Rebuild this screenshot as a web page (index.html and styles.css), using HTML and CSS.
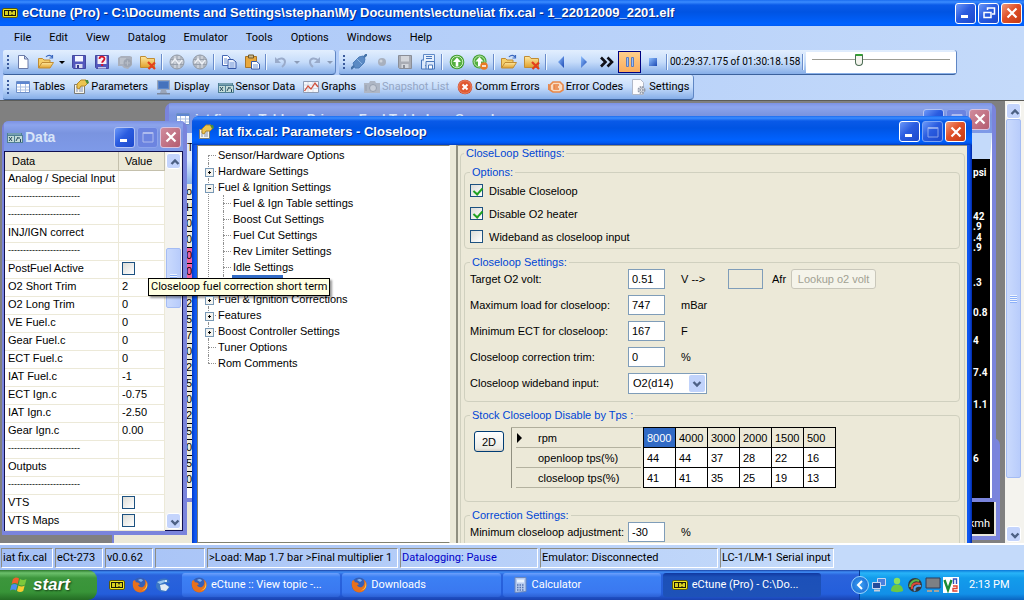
FILE: index.html
```html
<!DOCTYPE html>
<html lang="en">
<head>
<meta charset="utf-8">
<title>eCtune (Pro)</title>
<link rel="stylesheet" href="styles.css">
</head>
<body>
<svg class="sprite" aria-hidden="true">
  <defs>
    <linearGradient id="g-folder" x1="0" y1="0" x2="0" y2="1"><stop offset="0" stop-color="#ffe9a0"/><stop offset="1" stop-color="#e0a02c"/></linearGradient>
    <linearGradient id="g-blue" x1="0" y1="0" x2="1" y2="1"><stop offset="0" stop-color="#8fc0ff"/><stop offset="1" stop-color="#1c49b4"/></linearGradient>
    <symbol id="i-app" viewBox="0 0 16 16"><rect x=".5" y="3.500" width="15" height="9" rx="1.500" fill="#f0e820" stroke="#58580c"/><rect x="2" y="5" width="12" height="6" fill="#1a1a08"/><path d="M3 6h3v4H3zM7 6h2l1 2 1-2h2v4h-2l-1-1-1 1H7z" fill="#d8d020"/></symbol>
    <symbol id="i-new" viewBox="0 0 16 16"><path d="M3.500 1.500h6l3.500 3.500v9.500h-9.500z" fill="#fff" stroke="#6b7ba8"/><path d="M9.500 1.500v3.500h3.500z" fill="#cdd8ef" stroke="#6b7ba8"/></symbol>
    <symbol id="i-open" viewBox="0 0 16 16"><path d="M.5 14V4.500h4l1.500 1.500h6v3" fill="#f5cf6a" stroke="#c08c34"/><path d="M.5 14L4 8.500h11.500L12 14z" fill="url(#g-folder)" stroke="#c08c34"/><path d="M8 3c2-2.500 5-2 6 0M14.500 1v3h-3" fill="none" stroke="#3b68c0" stroke-width="1.200"/></symbol>
    <symbol id="i-save" viewBox="0 0 16 16"><path d="M1.500 1.500h13v13h-12l-1-1z" fill="#5358bd" stroke="#4448a0"/><path d="M4 2h8v5.500H4z" fill="#f4f6ff"/><path d="M4.500 10h7v4h-7z" fill="#d9dcf0"/><path d="M6 11h2v3H6z" fill="#33388c"/></symbol>
    <symbol id="i-saveas" viewBox="0 0 16 16"><path d="M1.500 1.500h13v13h-12l-1-1z" fill="#5358bd" stroke="#4448a0"/><path d="M3.500 2h9v8h-9z" fill="#f7f0f4"/><path d="M5.500 5c0-3 5-3 5-.2 0 2-2.300 1.800-2.300 4" fill="none" stroke="#d4142c" stroke-width="1.800"/><path d="M7.200 10h2v2h-2z" fill="#d4142c"/><path d="M4 13h8v1.500H4z" fill="#c4c8ea"/></symbol>
    <symbol id="i-savegray" viewBox="0 0 16 16"><path d="M1.500 1.500h13v13h-12l-1-1z" fill="#a9acb4" stroke="#8a8e98"/><path d="M4 2h8v5.500H4z" fill="#d3d6dc"/><path d="M4.500 10h7v4h-7z" fill="#d3d6dc"/><path d="M6 11h2v3H6z" fill="#8a8e98"/></symbol>
    <symbol id="i-print" viewBox="0 0 16 16"><path d="M1 4l3-2h9l2 1v8l-4 4-4-1-2-2H1z" fill="#aab0bc"/><path d="M3 4h6v6H3z" fill="#bcc2cc"/><circle cx="10.500" cy="9" r="4" fill="#9ea5b2"/><path d="M8 9h5M10.500 6.500v5" stroke="#b8bec8"/></symbol>
    <symbol id="i-folderx" viewBox="0 0 16 16"><path d="M.5 13.500v-11h5l1.500 2h7.500v9z" fill="url(#g-folder)" stroke="#c08c34"/><path d="M8 8l7 7M15 8.500L8.500 15" stroke="#e2401c" stroke-width="2.200"/></symbol>
    <symbol id="i-chip" viewBox="0 0 16 16"><circle cx="8" cy="8" r="7" fill="#c9ced6" stroke="#9098a4"/><path d="M4 2.500v11M8 1v14M12 2.500v11M1 5.500h14M1 10.500h14" stroke="#98a0ac"/><path d="M3 9l3-4 4 5 3-4" fill="none" stroke="#eef1f6" stroke-width="1.400"/></symbol>
    <symbol id="i-copy" viewBox="0 0 16 16"><path d="M1.500 1.500h5l2.500 2.500v7.500H1.500z" fill="#fff" stroke="#4668b4"/><path d="M7 5.500h5l3 2.500v6.500H7z" fill="#e7effd" stroke="#3557a8"/><path d="M3 5h3M3 7h3M3 9h3M8.500 9h5M8.500 11h5M8.500 13h5" stroke="#6f93d6"/></symbol>
    <symbol id="i-paste" viewBox="0 0 16 16"><path d="M1.500 2.500h11v11h-11z" fill="#e9a83c" stroke="#a87428"/><path d="M4.500 1h5v3h-5z" fill="#ccb78a" stroke="#6f5a2c"/><path d="M7.500 7.500h5l3 2.500v5H7.500z" fill="#fff" stroke="#3557a8"/><path d="M9 11h5M9 13h5" stroke="#6f93d6"/></symbol>
    <symbol id="i-undo" viewBox="0 0 16 16"><path d="M3 7c4-4 9-3 9 1 0 2-1 3.500-3 5" fill="none" stroke="#9aabca" stroke-width="2"/><path d="M2 3v6h6z" fill="#9aabca"/></symbol>
    <symbol id="i-redo" viewBox="0 0 16 16"><path d="M13 7C9 3 4 4 4 8c0 2 1 3.500 3 5" fill="none" stroke="#9aabca" stroke-width="2"/><path d="M14 3v6H8z" fill="#9aabca"/></symbol>
    <symbol id="i-plug" viewBox="0 0 16 16"><path d="M0 15l4-4M12 4l4-4" stroke="#4672a8" stroke-width="2.400"/><path d="M2 9l6-6 4-1 2 3-1 4-5 5-4 0z" fill="#5b8ac4" stroke="#4c7cb8"/><path d="M6 5l5 5" stroke="#8cb4e4"/></symbol>
    <symbol id="i-dot" viewBox="0 0 16 16"><circle cx="8" cy="8" r="4" fill="#a8b0be"/><circle cx="7" cy="7" r="1.500" fill="#ced3dc"/></symbol>
    <symbol id="i-disk2" viewBox="0 0 16 16"><path d="M3.500 .5h11v11h-11z" fill="#e6f0fc" stroke="#5f8ac8"/><path d="M3.500 6h-2v9h13V7.500H6V15" fill="#dbe8fa" stroke="#4a78bc"/><path d="M6 2.500h6M6 4.500h6M8.500 11h4v4h-4z" stroke="#4a78bc" fill="#fff"/></symbol>
    <symbol id="i-up" viewBox="0 0 16 16"><circle cx="8" cy="8" r="7.300" fill="#3f9c2c"/><circle cx="8" cy="8" r="5.800" fill="#54b040" stroke="#c6ecb8"/><path d="M8 3.500L12 8H9.300v4.500H6.700V8H4z" fill="#fff"/></symbol>
    <symbol id="i-upminus" viewBox="0 0 16 16"><circle cx="7.500" cy="7.500" r="7" fill="#3f9c2c"/><circle cx="7.500" cy="7.500" r="5.500" fill="#54b040" stroke="#c6ecb8"/><path d="M7.500 3l4 4.500H9V12H6V7.500H3.500z" fill="#fff"/><circle cx="12" cy="12" r="3.800" fill="#e87a24"/><path d="M10 12h4" stroke="#fff" stroke-width="1.500"/></symbol>
    <symbol id="i-left" viewBox="0 0 16 16"><path d="M11 2v12L5 8z" fill="url(#g-blue)"/></symbol>
    <symbol id="i-right" viewBox="0 0 16 16"><path d="M5 2v12l6-6z" fill="url(#g-blue)"/></symbol>
    <symbol id="i-ff" viewBox="0 0 16 16"><path d="M2 3.500L6.500 8 2 12.500M8.500 3.500L13 8l-4.500 4.500" fill="none" stroke="#101018" stroke-width="2.600"/></symbol>
    <symbol id="i-pause" viewBox="0 0 16 16"><path d="M4.500 3.500h2v9h-2zM9.500 3.500h2v9h-2z" fill="#9cc0f4" stroke="#5c7cc0"/></symbol>
    <symbol id="i-stop" viewBox="0 0 16 16"><path d="M4 4h8v8H4z" fill="url(#g-blue)"/></symbol>
    <symbol id="i-table" viewBox="0 0 16 16"><path d="M1.500 2.500h13v11h-13z" fill="#fff" stroke="#6d8fc8"/><path d="M2 3h12v2H2z" fill="#5d86d0"/><path d="M2 8h12M2 11h12M5.500 5v8M10.500 5v8" stroke="#a9bfe4"/></symbol>
    <symbol id="i-params" viewBox="0 0 16 16"><path d="M1.500 5.500h10v9h-10z" fill="#f6f5ee" stroke="#7c7c74"/><path d="M3 8h2M3 10h2M3 12h2M6 8h4M6 10h4M6 12h4" stroke="#7c90b8"/><path d="M4 5l4-4h5l2 3-3 3-4 0-2 3-2-1z" fill="#ecc450" stroke="#b48828"/><path d="M12 1h3l1 3-2 1z" fill="#4c8c3c"/></symbol>
    <symbol id="i-display" viewBox="0 0 16 16"><path d="M1.500 1.500h12v9h-12z" fill="#5b86c8" stroke="#9aa6ba"/><path d="M3 3h9v6H3z" fill="#4572bc"/><path d="M5 11h5l1 3H4z" fill="#9aa6ba"/><path d="M1 14h13v1.500H1z" fill="#7d889c"/></symbol>
    <symbol id="i-sensor" viewBox="0 0 16 16"><path d="M0 4h15v2h1v8H0z" fill="#4f7f94"/><path d="M1 7h6v6H1zM8 7h7v6H8z" fill="#c4dcd8"/><path d="M1 5h13" stroke="#9cc0cc"/><path d="M2 8l3 4M5 8l-3 4M9 12l2-4M12 8v2M13.500 10v3" stroke="#24485c"/></symbol>
    <symbol id="i-graph" viewBox="0 0 16 16"><path d="M.5 2.500h15v11H.5z" fill="#f6f7fb" stroke="#8e9cb4"/><path d="M1 6h14M1 9.500h14M5 3v10M10 3v10" stroke="#d6dbe6"/><path d="M1.500 12L5 7l3 3 4-6 3 4" fill="none" stroke="#d0503c" stroke-width="1.300"/></symbol>
    <symbol id="i-camera" viewBox="0 0 16 16"><path d="M0 4h5l1-2h5l1 2h4v10H0z" fill="#aeb6c4"/><circle cx="9" cy="9" r="3.500" fill="#c7cdd8" stroke="#969fae"/><path d="M2 6v6" stroke="#969fae"/></symbol>
    <symbol id="i-error" viewBox="0 0 16 16"><circle cx="8" cy="8" r="7.300" fill="#cc3c1c"/><circle cx="8" cy="8" r="6.300" fill="#e05830" stroke="#ec8c6c"/><path d="M5.500 5.500l5 5M10.500 5.500l-5 5" stroke="#fff" stroke-width="2"/></symbol>
    <symbol id="i-engine" viewBox="0 0 16 16"><path d="M2 6l3-3h7l3 3v5l-3 2H5l-3-2z" fill="#f8dcc4" stroke="#e88848" stroke-width="1.600"/><path d="M.8 5v6M11 6H6v4h5M6 8h4" fill="none" stroke="#e88040" stroke-width="1.400"/></symbol>
    <symbol id="i-gear" viewBox="0 0 16 16"><path d="M1.500 .5h8l3 3v12h-11z" fill="#fcfcfe" stroke="#b0b8c8"/><circle cx="10.500" cy="11" r="3" fill="#e4e6ea" stroke="#949cac" stroke-width="2" stroke-dasharray="1.600 .8"/><circle cx="10.500" cy="11" r="1.200" fill="#fff" stroke="#949cac"/></symbol>
    <symbol id="i-min" viewBox="0 0 16 16"><path d="M3 10h7v3H3z" fill="#fff"/></symbol>
    <symbol id="i-max" viewBox="0 0 16 16"><path d="M3 3.500h10v9.500H3z" fill="none" stroke="#fff"/><path d="M3 4h10" stroke="#fff" stroke-width="2"/></symbol>
    <symbol id="i-restore" viewBox="0 0 16 16"><path d="M6.500 5V3h7v6H11" fill="none" stroke="#fff" stroke-width="1.500"/><path d="M3 7.500h7v5H3z" fill="none" stroke="#fff" stroke-width="1.500"/></symbol>
    <symbol id="i-close" viewBox="0 0 16 16"><path d="M3.500 3.500l9 9M12.500 3.500l-9 9" stroke="#fff" stroke-width="2.200"/></symbol>
    <symbol id="i-chevup" viewBox="0 0 16 16"><path d="M4.500 10L8 6.500l3.500 3.500" fill="none" stroke="#4d6185" stroke-width="2.400"/></symbol>
    <symbol id="i-chevdown" viewBox="0 0 16 16"><path d="M4.500 6.500L8 10l3.500-3.500" fill="none" stroke="#4d6185" stroke-width="2.400"/></symbol>
    <symbol id="i-chevleft" viewBox="0 0 16 16"><path d="M10 4L6 8l4 4" fill="none" stroke="#fff" stroke-width="2"/></symbol>
    <symbol id="i-flag" viewBox="0 0 20 20"><path d="M4 4c2-2 4-2 6-.6L8.600 9C7 7.800 4.800 7.800 2.600 9z" fill="#f0602c"/><path d="M11 4c2 1.400 4.500 1.200 6.500 0L16 9.600c-2 1.200-4.200 1.200-6.300 0z" fill="#7cc83c"/><path d="M2.400 10c2-1.400 4.200-1.200 6 0L7 15.500c-2-1.200-4-1.200-6 0z" fill="#4c8cf0"/><path d="M9.400 10.600c2 1.300 4.300 1.200 6.300 0L14.200 16c-2 1.200-4.200 1.200-6.200 0z" fill="#f8cc30"/></symbol>
    <symbol id="i-fox" viewBox="0 0 16 16"><circle cx="8" cy="8" r="7.500" fill="#3560b8"/><path d="M1 4c-1 6 1 11 7 11.500 5 0 8-4 7.500-9.500-1-2-2-3-3-3.500 1.500 3 1 6-1.500 7.500-3 1-4.500-.5-5-2l2-.5C7 5.500 5 5 4 5.500L3 3z" fill="#e8701c"/><path d="M14 4c1.500 4 0 8-4 9.500 4-.5 6-3 5-7z" fill="#fcd048"/><path d="M6 3c2-1.500 4-1 5 .5L9 5z" fill="#7fb0ec"/></symbol>
    <symbol id="i-bird" viewBox="0 0 16 16"><path d="M1 9C1 4 5 1 10 1.500c3 .5 4.500 2 5 4l-5 1 5 3c-1 4-5 6-9 5-3-1-5-3-5-5.500z" fill="#3c78c4"/><path d="M5 8l5-1 4 3-3 4-5-1z" fill="#e4ecf4"/><path d="M2 5l7-2 3 1-7 3z" fill="#9cc8f0"/><circle cx="11" cy="4" r="1" fill="#fff"/></symbol>
    <symbol id="i-calc" viewBox="0 0 16 16"><path d="M3 .5h11v14L3 15.500z" fill="#b9cdf0" stroke="#6c88bc"/><path d="M5 2.500h7v3H5z" fill="#eaf4ff"/><path d="M5 8h7M5 10.500h7M5 13h7" stroke="#5474b0" stroke-width="1.500" stroke-dasharray="1.500 1"/></symbol>
    <symbol id="i-net" viewBox="0 0 16 16"><path d="M6.500 1.500h8v7h-8z" fill="#4a80dc" stroke="#c8d8f0"/><path d="M1.500 5.500h8v6h-8z" fill="#244c9c" stroke="#c8d8f0"/><path d="M3 12.500h6v2H3z" fill="#c8d0dc"/></symbol>
    <symbol id="i-msn" viewBox="0 0 16 16"><circle cx="8" cy="4" r="3.200" fill="#8ce05c"/><path d="M2 14c0-5 3-6.500 6-6.500S14 9 14 14c-3 1.500-9 1.500-12 0z" fill="#6cc844"/></symbol>
    <symbol id="i-rings" viewBox="0 0 16 16"><circle cx="8" cy="8" r="7" fill="#34383c"/><path d="M3 10c0-5 5-8 9-6" fill="none" stroke="#5cb848" stroke-width="2"/><path d="M5 12c-1-5 4-7 8-5" fill="none" stroke="#e04838" stroke-width="2"/><path d="M8 14c-2-4 2-6 6-5" fill="none" stroke="#58a0e8" stroke-width="2"/></symbol>
    <symbol id="i-monitor" viewBox="0 0 16 16"><path d="M1 1h14v10H1z" fill="#7c8084" stroke="#2c3c5c"/><path d="M2 13h5v2H2zM9 13h5v2H9z" fill="#a4a49c"/></symbol>
    <symbol id="i-vnc" viewBox="0 0 16 16"><path d="M0 0h16v16H0z" fill="#fff"/><path d="M1.500 3L5 13l3.500-10" fill="none" stroke="#1c8c34" stroke-width="2.400"/><path d="M10.500 7V2h3v5" fill="none" stroke="#3050c0" stroke-width="1.400"/><path d="M10 9h4v2.500h-4V14h4.500" fill="none" stroke="#e04030" stroke-width="1.400"/></symbol>
  </defs>
</svg>

<div class="app">
  <header class="titlebar titlebar-app">
    <svg class="icon"><use href="#i-app"/></svg>
    <h1 class="title">eCtune (Pro) - C:\Documents and Settings\stephan\My Documents\ectune\iat fix.cal - 1_22012009_2201.elf</h1>
    <button class="cap" aria-label="Minimize"><svg class="icon"><use href="#i-min"/></svg></button>
    <button class="cap" aria-label="Restore"><svg class="icon"><use href="#i-restore"/></svg></button>
    <button class="cap cap-close" aria-label="Close"><svg class="icon"><use href="#i-close"/></svg></button>
  </header>

  <div class="bars">
    <nav class="menu">
      <button>File</button><button>Edit</button><button>View</button><button>Datalog</button><button>Emulator</button><button>Tools</button><button>Options</button><button>Windows</button><button>Help</button>
    </nav>
    <div class="toolrow">
      <div class="strip">
        <span class="grip"></span>
        <button class="tool" aria-label="New"><svg class="icon"><use href="#i-new"/></svg></button>
        <button class="tool" aria-label="Open"><svg class="icon"><use href="#i-open"/></svg></button>
        <button class="drop" aria-label="Open recent"></button>
        <button class="tool" aria-label="Save"><svg class="icon"><use href="#i-save"/></svg></button>
        <button class="tool" aria-label="Save as"><svg class="icon"><use href="#i-saveas"/></svg></button>
        <button class="tool" aria-label="Upload" disabled><svg class="icon"><use href="#i-print"/></svg></button>
        <button class="tool" aria-label="Close file"><svg class="icon"><use href="#i-folderx"/></svg></button>
        <span class="sep"></span>
        <button class="tool" aria-label="Read chip" disabled><svg class="icon"><use href="#i-chip"/></svg></button>
        <button class="tool" aria-label="Write chip" disabled><svg class="icon"><use href="#i-chip"/></svg></button>
        <span class="sep"></span>
        <button class="tool" aria-label="Copy"><svg class="icon"><use href="#i-copy"/></svg></button>
        <button class="tool" aria-label="Paste"><svg class="icon"><use href="#i-paste"/></svg></button>
        <span class="sep"></span>
        <button class="tool" aria-label="Undo" disabled><svg class="icon"><use href="#i-undo"/></svg></button>
        <button class="drop" aria-label="Undo list" disabled></button>
        <button class="tool" aria-label="Redo" disabled><svg class="icon"><use href="#i-redo"/></svg></button>
        <button class="drop" aria-label="Redo list" disabled></button>
      </div>
      <div class="strip">
        <span class="grip"></span>
        <button class="tool" aria-label="Connect"><svg class="icon"><use href="#i-plug"/></svg></button>
        <button class="tool" aria-label="Record" disabled><svg class="icon"><use href="#i-dot"/></svg></button>
        <button class="tool" aria-label="Save log" disabled><svg class="icon"><use href="#i-savegray"/></svg></button>
        <button class="tool" aria-label="Save log as"><svg class="icon"><use href="#i-disk2"/></svg></button>
        <span class="sep"></span>
        <button class="tool" aria-label="Start emulator"><svg class="icon"><use href="#i-up"/></svg></button>
        <button class="tool" aria-label="Stop emulator"><svg class="icon"><use href="#i-upminus"/></svg></button>
        <span class="sep"></span>
        <button class="tool" aria-label="Open log"><svg class="icon"><use href="#i-open"/></svg></button>
        <button class="tool" aria-label="Close log"><svg class="icon"><use href="#i-folderx"/></svg></button>
        <span class="sep"></span>
        <button class="tool" aria-label="Back"><svg class="icon"><use href="#i-left"/></svg></button>
        <button class="tool" aria-label="Play"><svg class="icon"><use href="#i-right"/></svg></button>
        <button class="tool" aria-label="Fast forward"><svg class="icon"><use href="#i-ff"/></svg></button>
        <button class="tool tool-on" aria-label="Pause"><svg class="icon"><use href="#i-pause"/></svg></button>
        <button class="tool" aria-label="Stop"><svg class="icon"><use href="#i-stop"/></svg></button>
        <span class="sep"></span>
        <output class="clock">00:29:37.175 of 01:30:18.158</output>
        <span class="sep"></span>
        <div class="seek"><input type="range" min="0" max="100" value="33" aria-label="Log position"></div>
      </div>
    </div>
    <div class="toolrow">
      <div class="strip">
        <span class="grip"></span>
        <button class="text-tool"><svg class="icon"><use href="#i-table"/></svg>Tables</button>
        <button class="text-tool"><svg class="icon"><use href="#i-params"/></svg>Parameters</button>
        <button class="text-tool"><svg class="icon"><use href="#i-display"/></svg>Display</button>
        <button class="text-tool"><svg class="icon"><use href="#i-sensor"/></svg>Sensor Data</button>
        <button class="text-tool"><svg class="icon"><use href="#i-graph"/></svg>Graphs</button>
        <button class="text-tool" disabled><svg class="icon"><use href="#i-camera"/></svg>Snapshot List</button>
        <button class="text-tool"><svg class="icon"><use href="#i-error"/></svg>Comm Errors</button>
        <button class="text-tool"><svg class="icon"><use href="#i-engine"/></svg>Error Codes</button>
        <button class="text-tool"><svg class="icon"><use href="#i-gear"/></svg>Settings</button>
      </div>
    </div>
  </div>

  <main class="mdi">
    <div class="desk">
      <section class="win win-back"><div class="panel-beige"></div></section>
      <section class="win win-speed"><div class="speed">kmh</div></section>

      <section class="win win-tables">
        <header class="titlebar titlebar-idle">
          <svg class="icon"><use href="#i-table"/></svg>
          <h2 class="title">iat fix.cal: Tables: Primary Fuel Table Low Speed</h2>
          <button class="cap" aria-label="Minimize"><svg class="icon"><use href="#i-min"/></svg></button>
          <button class="cap cap-off" aria-label="Maximize"><svg class="icon"><use href="#i-max"/></svg></button>
          <button class="cap cap-close" aria-label="Close"><svg class="icon"><use href="#i-close"/></svg></button>
        </header>
        <div class="tables-body">
          <div class="tables-left">
            <div class="tables-menu">T</div>
            <div class="tables-bar"></div>
            <ul class="rpm">
              <li>on</li><li>H</li><li>00</li><li>00</li><li class="hot">00</li><li class="hot">00</li><li>00</li><li>25</li><li>50</li><li>75</li><li>00</li><li>25</li><li>50</li><li>00</li><li>20</li><li>50</li><li>00</li><li>50</li><li>00</li>
            </ul>
          </div>
          <div class="gauges">
            <span>psi</span><span>42</span><span>.9</span><span>.4</span><span>.9</span><span>.3</span><span>0.8</span><span>4</span><span>7.4</span><span>1.1</span><span>6</span>
          </div>
        </div>
      </section>

      <section class="win win-data">
        <header class="titlebar titlebar-idle">
          <svg class="icon"><use href="#i-sensor"/></svg>
          <h2 class="title">Data</h2>
          <button class="cap" aria-label="Minimize"><svg class="icon"><use href="#i-min"/></svg></button>
          <button class="cap cap-off" aria-label="Maximize"><svg class="icon"><use href="#i-max"/></svg></button>
          <button class="cap cap-close" aria-label="Close"><svg class="icon"><use href="#i-close"/></svg></button>
        </header>
        <div class="data-body">
          <table class="data">
            <thead><tr><th>Data</th><th>Value</th></tr></thead>
            <tbody>
              <tr><td>Analog / Special Input</td><td></td></tr>
              <tr><td class="rule">------------------------</td><td></td></tr>
              <tr><td class="rule">------------------------</td><td></td></tr>
              <tr><td>INJ/IGN correct</td><td></td></tr>
              <tr><td class="rule">------------------------</td><td></td></tr>
              <tr><td><label for="c-post">PostFuel Active</label></td><td><input type="checkbox" id="c-post"></td></tr>
              <tr><td>O2 Short Trim</td><td>2</td></tr>
              <tr><td>O2 Long Trim</td><td>0</td></tr>
              <tr><td>VE Fuel.c</td><td>0</td></tr>
              <tr><td>Gear Fuel.c</td><td>0</td></tr>
              <tr><td>ECT Fuel.c</td><td>0</td></tr>
              <tr><td>IAT Fuel.c</td><td>-1</td></tr>
              <tr><td>ECT Ign.c</td><td>-0.75</td></tr>
              <tr><td>IAT Ign.c</td><td>-2.50</td></tr>
              <tr><td>Gear Ign.c</td><td>0.00</td></tr>
              <tr><td class="rule">------------------------</td><td></td></tr>
              <tr><td>Outputs</td><td></td></tr>
              <tr><td class="rule">------------------------</td><td></td></tr>
              <tr><td><label for="c-vts">VTS</label></td><td><input type="checkbox" id="c-vts"></td></tr>
              <tr><td><label for="c-vtsm">VTS Maps</label></td><td><input type="checkbox" id="c-vtsm"></td></tr>
            </tbody>
          </table>
          <div class="scroll">
            <button class="scroll-btn" aria-label="Scroll up"><svg class="icon"><use href="#i-chevup"/></svg></button>
            <div class="scroll-track scroll-track-data"><div class="thumb"></div></div>
            <button class="scroll-btn" aria-label="Scroll down"><svg class="icon"><use href="#i-chevdown"/></svg></button>
          </div>
        </div>
      </section>

      <section class="win win-params">
        <header class="titlebar">
          <svg class="icon"><use href="#i-params"/></svg>
          <h2 class="title">iat fix.cal: Parameters - Closeloop</h2>
          <button class="cap" aria-label="Minimize"><svg class="icon"><use href="#i-min"/></svg></button>
          <button class="cap cap-off" aria-label="Maximize"><svg class="icon"><use href="#i-max"/></svg></button>
          <button class="cap cap-close" aria-label="Close"><svg class="icon"><use href="#i-close"/></svg></button>
        </header>
        <div class="params-body">
          <ul class="tree">
            <li><span>Sensor/Hardware Options</span></li>
            <li class="plus"><span>Hardware Settings</span></li>
            <li class="plus minus"><span>Fuel &amp; Ignition Settings</span>
              <ul>
                <li><span>Fuel &amp; Ign Table settings</span></li>
                <li><span>Boost Cut Settings</span></li>
                <li><span>Fuel Cut Settings</span></li>
                <li><span>Rev Limiter Settings</span></li>
                <li><span>Idle Settings</span></li>
                <li><span class="picked">Closeloop</span></li>
              </ul>
            </li>
            <li class="plus"><span>Fuel &amp; Ignition Corrections</span></li>
            <li class="plus"><span>Features</span></li>
            <li class="plus"><span>Boost Controller Settings</span></li>
            <li><span>Tuner Options</span></li>
            <li><span>Rom Comments</span></li>
          </ul>
          <form class="form">
            <fieldset class="outer">
              <legend>CloseLoop Settings:</legend>
              <fieldset>
                <legend>Options:</legend>
                <label class="check"><input type="checkbox" checked>Disable Closeloop</label>
                <label class="check"><input type="checkbox" checked>Disable O2 heater</label>
                <label class="check"><input type="checkbox">Wideband as closeloop input</label>
              </fieldset>
              <fieldset class="fields">
                <legend>Closeloop Settings:</legend>
                <div class="field"><label for="f-volt">Target O2 volt:</label><input id="f-volt" type="text" value="0.51"><span class="unit unit-wide">V --&gt;</span><input id="f-afr" type="text" disabled><label class="afr" for="f-afr">Afr</label><button type="button" disabled>Lookup o2 volt</button></div>
                <div class="field"><label for="f-load">Maximum load for closeloop:</label><input id="f-load" type="text" value="747"><span class="unit">mBar</span></div>
                <div class="field"><label for="f-ect">Minimum ECT for closeloop:</label><input id="f-ect" type="text" value="167"><span class="unit">F</span></div>
                <div class="field"><label for="f-trim">Closeloop correction trim:</label><input id="f-trim" type="text" value="0"><span class="unit">%</span></div>
                <div class="field"><label for="f-wide">Closeloop wideband input:</label><span class="combo"><select id="f-wide"><option>O2(d14)</option></select><svg class="icon"><use href="#i-chevdown"/></svg></span></div>
              </fieldset>
              <fieldset class="tps">
                <legend>Stock Closeloop Disable by Tps :</legend>
                <div class="tps-row">
                  <button type="button">2D</button>
                  <table class="grid">
                    <tr><th class="current">rpm</th><td class="sel">8000</td><td>4000</td><td>3000</td><td>2000</td><td>1500</td><td>500</td></tr>
                    <tr><th>openloop tps(%)</th><td>44</td><td>44</td><td>37</td><td>28</td><td>22</td><td>16</td></tr>
                    <tr><th>closeloop tps(%)</th><td>41</td><td>41</td><td>35</td><td>25</td><td>19</td><td>13</td></tr>
                  </table>
                </div>
              </fieldset>
              <fieldset class="fields">
                <legend>Correction Settings:</legend>
                <div class="field"><label for="f-min">Minimum closeloop adjustment:</label><input id="f-min" type="text" value="-30"><span class="unit">%</span></div>
              </fieldset>
            </fieldset>
          </form>
        </div>
      </section>
      <div class="tip" role="tooltip">Closeloop fuel correction short term</div>
    </div>
    <div class="scroll scroll-main">
      <button class="scroll-btn" aria-label="Scroll up"><svg class="icon"><use href="#i-chevup"/></svg></button>
      <div class="scroll-track scroll-track-main"><div class="thumb"></div></div>
      <button class="scroll-btn" aria-label="Scroll down"><svg class="icon"><use href="#i-chevdown"/></svg></button>
    </div>
  </main>

  <div class="status">
    <span>iat fix.cal</span><span>eCt-273</span><span>v0.0.62</span><span></span><span>&gt;Load: Map 1.7 bar &gt;Final multiplier 1</span><span class="log">Datalogging: Pause</span><span>Emulator: Disconnected</span><span>LC-1/LM-1 Serial input</span>
  </div>

  <footer class="taskbar">
    <button class="start"><svg class="flag"><use href="#i-flag"/></svg>start</button>
    <div class="quick">
      <button aria-label="eCtune"><svg class="icon"><use href="#i-app"/></svg></button>
      <button aria-label="Firefox"><svg class="icon"><use href="#i-fox"/></svg></button>
      <button aria-label="Thunderbird"><svg class="icon"><use href="#i-bird"/></svg></button>
    </div>
    <div class="tasks">
      <button><svg class="icon"><use href="#i-fox"/></svg>eCtune :: View topic -...</button>
      <button><svg class="icon"><use href="#i-fox"/></svg>Downloads</button>
      <button><svg class="icon"><use href="#i-calc"/></svg>Calculator</button>
      <button class="task-on"><svg class="icon"><use href="#i-app"/></svg>eCtune (Pro) - C:\Do...</button>
    </div>
    <div class="tray">
      <button class="hide" aria-label="Hide icons"><svg class="icon"><use href="#i-chevleft"/></svg></button>
      <svg class="icon"><use href="#i-net"/></svg>
      <svg class="icon"><use href="#i-msn"/></svg>
      <svg class="icon"><use href="#i-rings"/></svg>
      <svg class="icon"><use href="#i-monitor"/></svg>
      <svg class="icon"><use href="#i-vnc"/></svg>
      <time>2:13 PM</time>
    </div>
  </footer>
</div>
</body>
</html>
```
FILE: styles.css
```css
:root {
  --ui: Roboto, "Noto Sans", sans-serif;
  --form: "Liberation Sans", Arial, sans-serif;
  --face: #ece9d8;
}

* { box-sizing: border-box; }
body { margin: 0; font: 11px/14px var(--ui); color: #000; overflow: hidden; }
button, input, select { font: inherit; color: inherit; margin: 0; padding: 0; border: 0; background: none; }
ul { list-style: none; margin: 0; padding: 0; }
h1, h2 { margin: 0; }
table { border-collapse: collapse; border-spacing: 0; }
.sprite { position: absolute; width: 0; height: 0; }
.icon { width: 16px; height: 16px; flex: none; display: block; }

.app { display: flex; flex-direction: column; height: 100vh; }

/* title bars */
.titlebar {
  display: flex; align-items: center; gap: 2px; height: 30px; flex: none; padding: 2px 6px 0 6px;
  background: linear-gradient(#1a6cf0 0, #3b8cff 2px, #0a5ae8 5px, #0054e3 12px, #0062ff 24px, #0058f0 27px, #003cc0 100%);
  color: #fff;
}
.titlebar-app { height: 26px; padding: 0 2px 0 2px; }
.titlebar-idle { background: linear-gradient(#7c92e4, #8ca4ec 4px, #7a94e0 12px, #7e9ae8 100%); color: #d8e4f8; padding-right: 2px; }
.title {
  flex: 1; min-width: 0; overflow: hidden; white-space: nowrap; padding-left: 2px;
  font: bold 13px/18px var(--form); text-shadow: 1px 1px #0a2c88;
}
.titlebar-idle .title { text-shadow: none; }
.cap {
  display: grid; place-items: center; width: 21px; height: 21px; flex: none;
  border: 1px solid #fff; border-radius: 3px; background: linear-gradient(135deg, #6c98f8, #2a5ce0 45%, #1c48cc);
}
.cap-close { background: linear-gradient(135deg, #f09a7c, #e05028 45%, #c43a14); }
.cap-off { border-color: #7ca4f4; }
.cap-off .icon { opacity: .45; }
.titlebar-idle .cap { border-color: #b4c4f4; }
.titlebar-idle .cap-off { border-color: #8ca4ec; background: #6c84e0; }
.titlebar-idle .cap-close { background: linear-gradient(135deg, #d08c9c, #b45c70); border-color: #d8c4e0; }

/* menu and tool bars */
.bars { flex: none; height: 74px; background: linear-gradient(90deg, #a9c6f8, #c4dafa); }
.menu { display: flex; height: 24px; padding-left: 7px; }
.menu button { padding: 0 7px; margin-right: 4px; }
.toolrow { display: flex; gap: 3px; height: 25px; padding-left: 3px; }
.strip {
  display: flex; align-items: center; padding-left: 2px; border-radius: 2px 3px 4px 2px;
  background: linear-gradient(#e2eefe, #c6dcfa 50%, #86aee8);
  border-bottom: 1px solid #3b619c; border-right: 1px solid #5f86c4;
}
.grip { width: 2px; height: 14px; margin: 0 2px; background: repeating-linear-gradient(#3a5a9c 0 2px, transparent 2px 4px); }
.tool { width: 23px; height: 22px; display: grid; place-items: center; flex: none; }
.tool-on { border: 1px solid #000080; background: linear-gradient(#ffcf8c, #fbac5c); }
.drop { width: 10px; height: 22px; display: grid; place-items: center; }
.drop::before { content: ""; border: 3px solid transparent; border-top-color: #000; border-bottom: 0; }
.drop:disabled::before { border-top-color: #8c9cb8; }
.sep { width: 1px; height: 16px; margin: 0 3px 0 2px; background: #6a8ccb; box-shadow: 1px 0 #f1f9ff; }
.clock { font-size: 10px; width: 130px; text-align: center; white-space: nowrap; }
.seek { width: 150px; height: 21px; background: #fff; padding: 0 6px; }
.seek input { appearance: none; width: 100%; height: 16px; display: block; background: linear-gradient(#9c9c94, #9c9c94) 0 7px / 100% 1px no-repeat; }
.seek input::-webkit-slider-thumb {
  appearance: none; width: 8px; height: 12px; border: 1px solid #4c6c54; border-top: 2px solid #34a034;
  border-radius: 1px 1px 4px 4px; background: #f4f4ee;
}
.text-tool { display: flex; align-items: center; gap: 2px; padding: 0 4px; height: 22px; white-space: nowrap; }
.text-tool:disabled { color: #93a5c4; }

/* document area */
.mdi { flex: 1; min-height: 0; display: flex; background: #808080; border-top: 1px solid #5c5c58; border-bottom: 2px solid #fff; }
.desk { position: relative; flex: 1; overflow: hidden; }
.win { position: absolute; display: flex; flex-direction: column; border-radius: 7px 7px 0 0; overflow: hidden; background: #7a84dc; font-family: var(--form); }
.win-back { left: 112px; right: 300px; top: 240px; bottom: 0; border-left: 2px solid #7a84dc; }
.panel-beige { flex: 1; background: var(--face); }
.win-speed { left: 700px; right: 5px; top: 337px; height: 102px; padding: 3px 4px 4px; }
.speed { flex: 1; display: flex; align-items: flex-end; justify-content: flex-end; background: #000; color: #fff; border: 2px solid #e8e6dc; font: 11px/14px var(--ui); padding: 0 4px 3px 0; }
.win-tables { left: 165px; right: 9px; top: 2px; height: 399px; padding: 0 4px 4px; }
.tables-body { flex: 1; min-height: 0; display: flex; justify-content: space-between; background: var(--face); }
.tables-left { width: 60px; padding-left: 17px; overflow: hidden; background: #fff; }
.tables-menu { height: 27px; padding: 7px 0 0 1px; background: #dce8fc; }
.tables-bar { height: 24px; background: linear-gradient(#dcebfe, #86aee8); }
.rpm li { height: 16px; line-height: 15px; border-bottom: 1px solid #000; background: var(--face); }
.rpm .hot { background: #f060a0; }
.gauges {
  display: grid; grid-template-rows: 19px 44px 10px 11px 10px 35px 30px 28px 32px 32px 54px; align-items: end;
  width: 60px; padding-left: 41px; background: #000; color: #fff; border-top: 26px solid #c4dafa; border-right: 2px solid #fff;
  font: bold 10px/10px var(--ui);
}

.win-data { left: 2px; top: 20px; width: 185px; height: 414px; padding: 0 4px 4px 2px; }
.win-data .title { font-size: 14px; padding-left: 0; }
.win-data .titlebar { padding: 2px 2px 0 3px; }
.data-body { flex: 1; min-height: 0; display: flex; background: #fff; border: 1px solid #101050; }
.data { flex: 1; table-layout: fixed; }
.data th { height: 18px; padding: 0 7px; text-align: left; font-weight: normal; background: var(--face); border-right: 1px solid #c4c0ac; border-bottom: 1px solid #c4c0ac; }
.data th:last-child { width: 46px; padding: 0 6px; }
.data td { height: 18px; padding: 0 3px 2px; line-height: 14px; white-space: nowrap; border-right: 1px solid #ece9d8; border-bottom: 1px solid #ece9d8; }
.data .rule { font-size: 9px; }
input[type="checkbox"] { appearance: none; display: block; position: relative; width: 13px; height: 13px; border: 1px solid #1c5180; background: linear-gradient(135deg, #dcdcd7, #fff); flex: none; }
input[type="checkbox"]:checked::after { content: ""; position: absolute; left: 4px; top: 1px; width: 4px; height: 7px; border: solid #21a121; border-width: 0 2px 2px 0; transform: rotate(42deg); }

.scroll { display: flex; flex-direction: column; width: 17px; flex: none; padding: 1px; background: #f4f3ee; }
.scroll-btn { height: 16px; display: grid; place-items: center; border: 1px solid #fff; border-radius: 3px; background: #c4d4fc; overflow: hidden; }
.scroll-track { flex: 1; min-height: 0; display: flex; flex-direction: column; }
.thumb { flex: 1; display: grid; place-items: center; border: 1px solid #a4bcf4; border-radius: 2px; background: linear-gradient(90deg, #cadafd, #b8ccfb); }
.thumb::before { content: ""; width: 7px; height: 8px; background: repeating-linear-gradient(#eef4fe 0 1px, #8cb0f8 1px 2px); }
.scroll-track-data { padding: 79px 0 205px; }
.scroll-main { width: 19px; padding: 2px 3px 1px 1px; }
.scroll-track-main { padding-bottom: 48px; }

/* parameters window */
.win-params { left: 192px; right: 33px; top: 15px; bottom: 0; padding: 0 5px; background: linear-gradient(90deg, #0038c8, #1058f0 3px, #1058f0 calc(100% - 3px), #0028a8); }
.win-params .titlebar { height: 29px; margin: 0 -5px; }
.params-body { flex: 1; min-height: 0; display: grid; grid-template-columns: 253px 1fr; gap: 6px; background: var(--face); }
.tree { background: #fff; border: 1px solid #808070; border-right-color: #fff; padding: 1px 0 0 6px; }
.tree li { position: relative; padding-left: 13px; line-height: 16px; }
.tree li::before { content: ""; position: absolute; left: 4px; top: 0; bottom: 0; border-left: 1px dotted #909090; }
.tree li:first-child::before { top: 8px; }
.tree li li:first-child::before { top: 0; }
.tree li:last-child::before { bottom: auto; height: 8px; }
.tree li::after { content: ""; position: absolute; left: 4px; top: 8px; width: 8px; border-top: 1px dotted #909090; }
.tree .plus > span::before {
  content: ""; position: absolute; z-index: 1; left: 1px; top: 5px; width: 7px; height: 7px; border: 1px solid #7898b5;
  background: linear-gradient(#000, #000) center / 3px 1px no-repeat, linear-gradient(#000, #000) center / 1px 3px no-repeat, #f4f3ee;
}
.tree .minus > span::before { background: linear-gradient(#000, #000) center / 3px 1px no-repeat, #f4f3ee; }
.tree span { padding: 1px; }
.tree ul { padding-left: 2px; }
.tree .picked { display: inline-block; height: 16px; line-height: 14px; background: #316ac5; color: #fff; }

.form { min-width: 0; overflow: hidden; padding: 1px 2px 0; border-left: 2px solid #908f80; border-top: 1px solid #908f80; }
fieldset { margin: 0; min-width: 0; padding: 0 5px; border: 1px solid #d0d0bf; border-radius: 4px; }
legend { padding: 0 2px; line-height: 13px; color: #0046d5; }
.outer { padding: 6px 4px 20px 3px; }
.outer > fieldset + fieldset { margin-top: 7px; }
.check { display: flex; align-items: center; gap: 6px; height: 23px; }
.field { display: flex; align-items: center; height: 20px; margin-bottom: 6px; white-space: nowrap; }
.field:last-child { margin-bottom: 8px; }
.field > label:first-child { width: 158px; }
.field input { width: 37px; height: 20px; border: 1px solid #7f9db9; background: #fff; padding: 0 3px; }
.field input:disabled { width: 35px; background: var(--face); }
.unit { padding-left: 16px; }
.unit-wide { width: 63px; }
.afr { padding: 0 5px 0 9px; }
.field button { width: 85px; height: 20px; border: 1px solid #c9c7ba; border-radius: 3px; background: #f5f4ea; color: #a1a192; }
.combo { position: relative; }
.combo select { appearance: none; width: 79px; height: 21px; border: 1px solid #7f9db9; background: #fff; padding: 0 4px; display: block; }
.combo .icon { position: absolute; right: 2px; top: 2px; height: 17px; background: #c1d3fb; border-radius: 2px; pointer-events: none; }
.tps-row { display: flex; align-items: flex-start; gap: 7px; padding: 5px 0 13px 4px; }
.tps-row button { width: 30px; height: 21px; margin-top: 4px; border: 1px solid #003c74; border-radius: 3px; background: linear-gradient(#fff, #ecebe5 85%, #d6d0c5); }
.grid { border-left: 1px solid #908f80; border-top: 1px solid #b0ae9c; }
.grid th { width: 132px; height: 20px; padding: 0 0 0 26px; font-weight: normal; text-align: left; background: linear-gradient(#b4b2a0, #b4b2a0) 4px 100% / 125px 1px no-repeat; }
.grid .current::before { content: ""; float: left; margin: 2px 0 0 -21px; border: 5px solid transparent; border-left-color: #000; border-right: 0; }
.grid td { width: 32px; height: 20px; padding: 0 0 0 3px; background: #fff; border: 1px solid #000; }
.grid tr:first-child td { background: var(--face); }
.grid tr:first-child .sel { background: #316ac5; color: #fff; }

.tip { position: absolute; left: 148px; top: 177px; padding: 1px 2px; border: 1px solid #000; background: #ffffe1; box-shadow: 2px 2px 2px #0006; white-space: nowrap; }

/* status bar */
.status { flex: none; display: grid; grid-template-columns: 52px 48px 48px 50px 191px 138px 178px 114px; gap: 2px; height: 25px; padding: 3px 1px 2px; background: linear-gradient(90deg, #a4c0f6, #c4dafa 80%); }
.status span { border: 1px solid #8c8c84; border-right-color: #fff; border-bottom-color: #fff; padding-left: 1px; line-height: 18px; white-space: nowrap; }
.status .log { color: #0000c8; }

/* taskbar */
.taskbar { flex: none; display: flex; height: 30px; color: #fff; background: linear-gradient(#1941a5, #3f8cf4 2px, #2a63dc 5px, #245edb 24px, #1a42b0); }
.start { display: flex; align-items: center; gap: 4px; width: 97px; padding: 0 0 0 9px; border-radius: 0 9px 9px 0; background: linear-gradient(#2c7a2c, #6cc06c 3px, #3c963c 8px, #389438 22px, #246c24); font: italic bold 17px/24px var(--form); text-shadow: 1px 1px 2px #143c14; }
.flag { width: 20px; height: 20px; }
.quick { display: flex; align-items: center; gap: 7px; width: 85px; padding-left: 12px; }
.tasks { flex: 1; display: flex; gap: 2px; padding: 3px 38px 3px 0; }
.tasks button { flex: 1; min-width: 0; display: flex; align-items: center; gap: 4px; padding: 0 9px; border-radius: 3px; background: linear-gradient(#6ca0fc, #3c80f4 4px, #3a78f0 80%, #2c60d4); white-space: nowrap; overflow: hidden; }
.tasks .task-on { background: linear-gradient(#1038a0, #1c50b8 4px, #1e52b8); }
.tray { display: flex; align-items: center; gap: 2px; width: 165px; background: linear-gradient(#0c78d8, #28b4f8 3px, #129ceb 8px, #1290e8 24px, #0a64c0); border-left: 1px solid #083c98; }
.hide { width: 18px; height: 18px; margin-left: -9px; border-radius: 50%; border: 1px solid #9cd4fc; background: radial-gradient(#3ca0f4, #1464d0); display: grid; place-items: center; }
.tray time { padding-left: 8px; }
```
